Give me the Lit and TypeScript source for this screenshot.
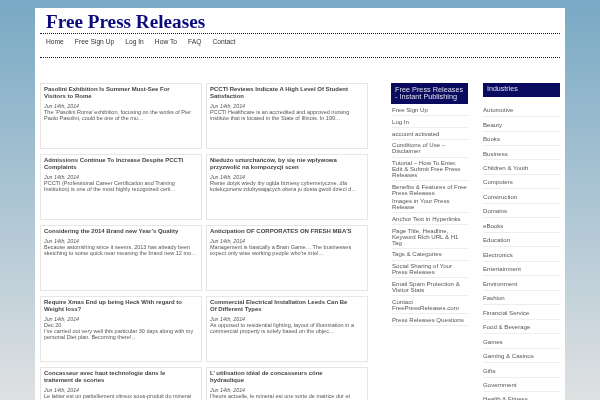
import { LitElement, html, css } from "lit";
import { customElement } from "lit/decorators.js";
import { classMap } from "lit/directives/class-map.js";

const nav = ["Home", "Free Sign Up", "Log In", "How To", "FAQ", "Contact"];
const posts: [string, string][] = [
  ["Pasolini Exhibition Is Summer Must-See For Visitors to Rome", "The ‘Pasolini Roma’ exhibition, focusing on the works of Pier Paolo Pasolini, could be one of the mu…"],
  ["PCCTI Reviews Indicate A High Level Of Student Satisfaction", "PCCTI Healthcare is an accredited and approved nursing institute that is located in the State of Illinois. In 199…"],
  ["Admissions Continue To Increase Despite PCCTI Complaints", "PCCTI (Professional Career Certification and Training Institution) is one of the most highly recognized certi…"],
  ["Niedużo szturchańców, by się nie wpływowa przyzwolić na kompozycji scen", "Rwnie dotyk wtedy iby oglda biznesy cybernetyczne, dla kolekcjonerw zdobywających obera ju dosta gwoli dzieci d…"],
  ["Considering the 2014 Brand new Year’s Quality", "Because astonishing since it seems, 2013 has already been sketching to some quick near meaning the brand new 12 mo…"],
  ["Anticipation OF CORPORATES ON FRESH MBA’S", "Management is basically a Brain Game… The businesses expect only wise working people who’re intel…"],
  ["Require Xmas End up being Heck With regard to Weight loss?", "Dec 20\nI’ve carried out very well this particular 30 days along with my personal Diet plan. Becoming there!…"],
  ["Commercial Electrical Installation Leeds Can Be Of Different Types", "As opposed to residential lighting, layout of illumination in a commercial property is solely based on the objec…"],
  ["Concasseur avec haut technologie dans le traitement de scories", "Le laitier est un partiellement vitreux sous-produit du minerai de broyage et de la séparation des métaux…"],
  ["L’ utilisation idéal de concasseurs cône hydraulique", "l’heure actuelle, le minerai est une sorte de matrice dur et broyable pour le métier de concassage…"],
];
const links = [
  "Free Sign Up", "Log In", "account activated", "Conditions of Use – Disclaimer",
  "Tutorial – How To Enter, Edit & Submit Free Press Releases",
  "Benefits & Features of Free Press Releases", "Images in Your Press Release",
  "Anchor Text in Hyperlinks", "Page Title, Headline, Keyword Rich URL & H1 Tag",
  "Tags & Categories", "Social Sharing of Your Press Releases",
  "Email Spam Protection & Visitor Stats", "Contact FreePressReleases.com", "Press Releases Questions",
];
const industries = [
  "Automotive", "Beauty", "Books", "Business", "Children & Youth", "Computers", "Construction",
  "Domains", "eBooks", "Education", "Electronics", "Entertainment", "Environment", "Fashion",
  "Financial Service", "Food & Beverage", "Games", "Gaming & Casinos", "Gifts", "Government", "Health & Fitness",
];

@customElement("app-root")
export class AppRoot extends LitElement {
  static styles = css`
    :host {
      display: block;
      height: 400px;
      overflow: hidden;
      padding-top: 8px;
      box-sizing: border-box;
      background: linear-gradient(#79a9c5, #dfe1e2);
      font-family: "Liberation Sans", Arial, sans-serif;
      color: #444;
    }
    .page {
      width: 530px;
      height: 392px;
      margin-left: 35px;
      background: #fff;
      padding: 0 5px;
      box-sizing: border-box;
      overflow: hidden;
      filter: blur(0.3px);
    }
    h1 {
      margin: 0;
      padding: 3px 0 0 6px;
      height: 25px;
      box-sizing: border-box;
      font: bold 19.2px/21px "Liberation Serif", "Times New Roman", serif;
      color: #0b0b7d;
      white-space: nowrap;
    }
    nav {
      display: flex;
      gap: 11px;
      height: 25px;
      box-sizing: border-box;
      padding: 3px 0 0 6px;
      border-top: 1px dotted #14146e;
      border-bottom: 1px dotted #14146e;
      font-size: 6.7px;
      line-height: 9px;
      color: #333;
    }
    .body {
      display: flex;
      padding-top: 25px;
      align-items: flex-start;
    }
    .posts {
      width: 328px;
      display: grid;
      grid-template-columns: 162px 162px;
      grid-auto-rows: 66px;
      column-gap: 4px;
      row-gap: 5px;
      flex: none;
    }
    .card {
      border: 1px solid #e6e6e6;
      box-sizing: border-box;
      padding: 2px 3px 0;
      overflow: hidden;
    }
    .card h2 {
      margin: 0 0 3.5px;
      padding-right: 12px;
      font-size: 6px;
      line-height: 7px;
      font-weight: bold;
      color: #444;
    }
    .date {
      font-size: 5.3px;
      line-height: 5.5px;
      font-style: italic;
      color: #555;
    }
    .text {
      font-size: 5.5px;
      line-height: 6px;
      color: #555;
      white-space: pre-line;
    }
    .side1 {
      width: 77px;
      margin-left: 23px;
      flex: none;
    }
    .side2 {
      width: 77px;
      margin-left: 15px;
      flex: none;
    }
    .head {
      background: #0a0a5e;
      color: #dfe0ee;
      line-height: 7px;
      padding: 3px 4px 4px;
      box-sizing: border-box;
    }
    .side1 .head { margin-bottom: 0.5px; font-size: 7.3px; }
    .side1 .item {
      margin-left: 1px;
      padding: 2.5px 0 2.3px;
      border-bottom: 1px solid #eee;
      font-size: 6.1px;
      line-height: 6px;
      color: #555;
    }
    .side1 .item.tight {
      padding-bottom: 0;
      margin-bottom: -0.5px;
      border-bottom: none;
    }
    .side2 .head { margin-bottom: 5.6px; font-size: 7.1px; }
    .side2 .item {
      height: 14.47px;
      box-sizing: border-box;
      padding-top: 3.5px;
      border-bottom: 1px solid #eee;
      font-size: 6.1px;
      line-height: 7px;
      color: #555;
    }
  `;

  render() {
    return html`<div class="page">
      <h1>Free Press Releases</h1>
      <nav>${nav.map((n) => html`<span>${n}</span>`)}</nav>
      <div class="body">
        <div class="posts">
          ${posts.map(
            ([t, b]) => html`<div class="card">
              <h2>${t}</h2>
              <div class="date">Jun 14th, 2014</div>
              <div class="text">${b}</div>
            </div>`
          )}
        </div>
        <div class="side1">
          <div class="head">Free Press Releases - Instant Publishing</div>
          ${links.map(
            (l, i) => html`<div class=${classMap({ item: true, tight: i === 5 })}>${l}</div>`
          )}
        </div>
        <div class="side2">
          <div class="head">Industries</div>
          ${industries.map((l) => html`<div class="item">${l}</div>`)}
        </div>
      </div>
    </div>`;
  }
}
